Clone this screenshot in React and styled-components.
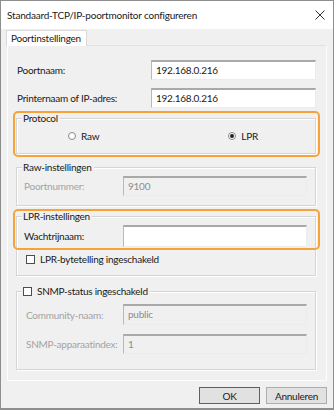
import React from "react";
import styled, { createGlobalStyle } from "styled-components";

const GlobalStyle = createGlobalStyle`
  html, body {
    margin: 0;
    padding: 0;
    background: #f0f0f0;
  }
  * {
    box-sizing: border-box;
  }
`;

const Window = styled.div`
  width: 334px;
  height: 410px;
  border: 1px solid #8e8e8e;
  border-bottom-width: 2px;
  background: #f0f0f0;
  font-family: "Segoe UI", Lato, "Liberation Sans", sans-serif;
  font-size: 10px;
  letter-spacing: -0.25px;
  color: #1a1a1a;
  display: flex;
  flex-direction: column;
  overflow: hidden;
`;

const TitleBar = styled.div`
  height: 28px;
  background: #fff;
  display: flex;
  align-items: center;
  justify-content: space-between;
  padding: 0 6px 0 6px;
  font-size: 10px;
  letter-spacing: -0.2px;
`;

const Close = styled.span`
  width: 14px;
  display: flex;
  justify-content: center;
`;

const Body = styled.div`
  flex: 1;
  padding: 1px 6px 0 5px;
  display: flex;
  flex-direction: column;
`;

const TabRow = styled.div`
  display: flex;
  height: 15px;
`;

const Tab = styled.div`
  height: 16px;
  background: #fff;
  border: 1px solid #d9d9d9;
  border-bottom: none;
  padding: 0 5px 0 4px;
  line-height: 15px;
  position: relative;
  z-index: 1;
`;

const Panel = styled.div`
  margin-left: 1px;
  height: 336px;
  border: 1px solid #fdfdfd;
  border-top-color: #e3e3e3;
  padding: 14px 10px 0 8px;
  display: flex;
  flex-direction: column;
`;

const FieldRow = styled.div`
  display: flex;
  align-items: center;
  height: ${(p) => p.$h || 20}px;
  margin-top: ${(p) => p.$mt || 0}px;
`;

const Label = styled.span`
  width: ${(p) => p.$w}px;
  padding-left: ${(p) => p.$pl || 0}px;
  color: ${(p) => (p.$disabled ? "#a3a3a3" : "#1a1a1a")};
  flex-shrink: 0;
  white-space: nowrap;
`;

const Input = styled.div`
  flex: 1;
  height: 100%;
  background: ${(p) => (p.$disabled ? "#f0f0f0" : "#fff")};
  border-top: 2px solid #a9a9a9;
  border-left: 1px solid #b9b9b9;
  border-right: 1px solid #ececec;
  border-bottom: 1px solid #ececec;
  padding: 1px 0 0 4px;
  color: ${(p) => (p.$disabled ? "#8d8d8d" : "#1a1a1a")};
  line-height: 14px;
`;

const GroupWrap = styled.div`
  position: relative;
  margin-top: ${(p) => p.$mt}px;
`;

const Group = styled.div`
  position: relative;
  height: ${(p) => p.$h}px;
  border: 1px solid #d5d5d5;
  box-shadow: inset 1px 1px 0 #fff, 1px 1px 0 #fff;
  padding: ${(p) => p.$pad || "0"};
  display: flex;
  flex-direction: column;
`;

const Caption = styled.div`
  position: absolute;
  top: -8px;
  left: 5px;
  padding: 0 2px 0 1px;
  background: #f0f0f0;
  display: flex;
  align-items: center;
  gap: 5px;
  line-height: 14px;
  white-space: nowrap;
`;

const Highlight = styled.div`
  position: absolute;
  left: -3px;
  right: -4px;
  top: ${(p) => p.$top}px;
  height: ${(p) => p.$h}px;
  border: 2px solid #f7a33a;
  border-radius: 5px;
  pointer-events: none;
`;

const RadioRow = styled.div`
  display: flex;
  align-items: center;
  height: 100%;
`;

const RadioItem = styled.label`
  display: flex;
  align-items: center;
  gap: 5px;
  margin-left: ${(p) => p.$ml}px;
`;

const RadioDot = styled.span`
  width: 8px;
  height: 8px;
  border-radius: 50%;
  border: 1px solid #8a8a8a;
  background: #fff;
  display: flex;
  align-items: center;
  justify-content: center;
  &::after {
    content: "";
    width: 4px;
    height: 4px;
    border-radius: 50%;
    background: ${(p) => (p.$on ? "#222" : "transparent")};
  }
`;

const Box = styled.span`
  width: 9px;
  height: 9px;
  border: 1px solid #4d4d4d;
  background: #fff;
  flex-shrink: 0;
`;

const CheckRow = styled.div`
  display: flex;
  align-items: center;
  gap: 5px;
  margin-top: ${(p) => p.$mt}px;
  padding-left: ${(p) => p.$pl}px;
`;

const Footer = styled.div`
  display: flex;
  justify-content: flex-end;
  gap: 6px;
  padding: 6px 0 0 0;
`;

const Button = styled.div`
  width: 61px;
  height: 17px;
  display: flex;
  align-items: center;
  justify-content: center;
  background: #e1e1e1;
  border: 1px solid ${(p) => (p.$primary ? "#0078d7" : "#adadad")};
`;

function CloseIcon() {
  return (
    <svg width="10" height="10" viewBox="0 0 10 10">
      <path d="M0.5 0.5 L9.5 9.5 M9.5 0.5 L0.5 9.5" stroke="#333" strokeWidth="1" fill="none" />
    </svg>
  );
}

export default function App() {
  return (
    <>
      <GlobalStyle />
      <Window>
        <TitleBar>
          <span>Standaard-TCP/IP-poortmonitor configureren</span>
          <Close>
            <CloseIcon />
          </Close>
        </TitleBar>
        <Body>
          <TabRow>
            <Tab>Poortinstellingen</Tab>
          </TabRow>
          <Panel>
            <FieldRow>
              <Label $w={135} $pl={1}>Poortnaam:</Label>
              <Input>192.168.0.216</Input>
            </FieldRow>
            <FieldRow $mt={8}>
              <Label $w={135} $pl={1}>Printernaam of IP-adres:</Label>
              <Input>192.168.0.216</Input>
            </FieldRow>

            <GroupWrap $mt={10}>
              <Group $h={36}>
                <Caption>Protocol</Caption>
                <RadioRow>
                  <RadioItem $ml={51}>
                    <RadioDot />
                    Raw
                  </RadioItem>
                  <RadioItem $ml={129}>
                    <RadioDot $on />
                    LPR
                  </RadioItem>
                </RadioRow>
              </Group>
              <Highlight $top={-7} $h={46} />
            </GroupWrap>

            <GroupWrap $mt={13}>
              <Group $h={39} $pad="8px 8px 0 7px">
                <Caption>Raw-instellingen</Caption>
                <FieldRow>
                  <Label $w={99} $disabled>Poortnummer:</Label>
                  <Input $disabled>9100</Input>
                </FieldRow>
              </Group>
            </GroupWrap>

            <GroupWrap $mt={10}>
              <Group $h={60} $pad="8px 8px 0 7px">
                <Caption>LPR-instellingen</Caption>
                <FieldRow $h={22}>
                  <Label $w={99}>Wachtrijnaam:</Label>
                  <Input />
                </FieldRow>
                <CheckRow $mt={6} $pl={2}>
                  <Box />
                  LPR-bytetelling ingeschakeld
                </CheckRow>
              </Group>
              <Highlight $top={-7} $h={41} />
            </GroupWrap>

            <GroupWrap $mt={15}>
              <Group $h={79} $pad="12px 8px 0 7px">
                <Caption>
                  <Box />
                  SNMP-status ingeschakeld
                </Caption>
                <FieldRow $h={21}>
                  <Label $w={99} $pl={2} $disabled>Community-naam:</Label>
                  <Input $disabled>public</Input>
                </FieldRow>
                <FieldRow $mt={9}>
                  <Label $w={99} $pl={2} $disabled>SNMP-apparaatindex:</Label>
                  <Input $disabled>1</Input>
                </FieldRow>
              </Group>
            </GroupWrap>
          </Panel>
          <Footer>
            <Button $primary>OK</Button>
            <Button>Annuleren</Button>
          </Footer>
        </Body>
      </Window>
    </>
  );
}
